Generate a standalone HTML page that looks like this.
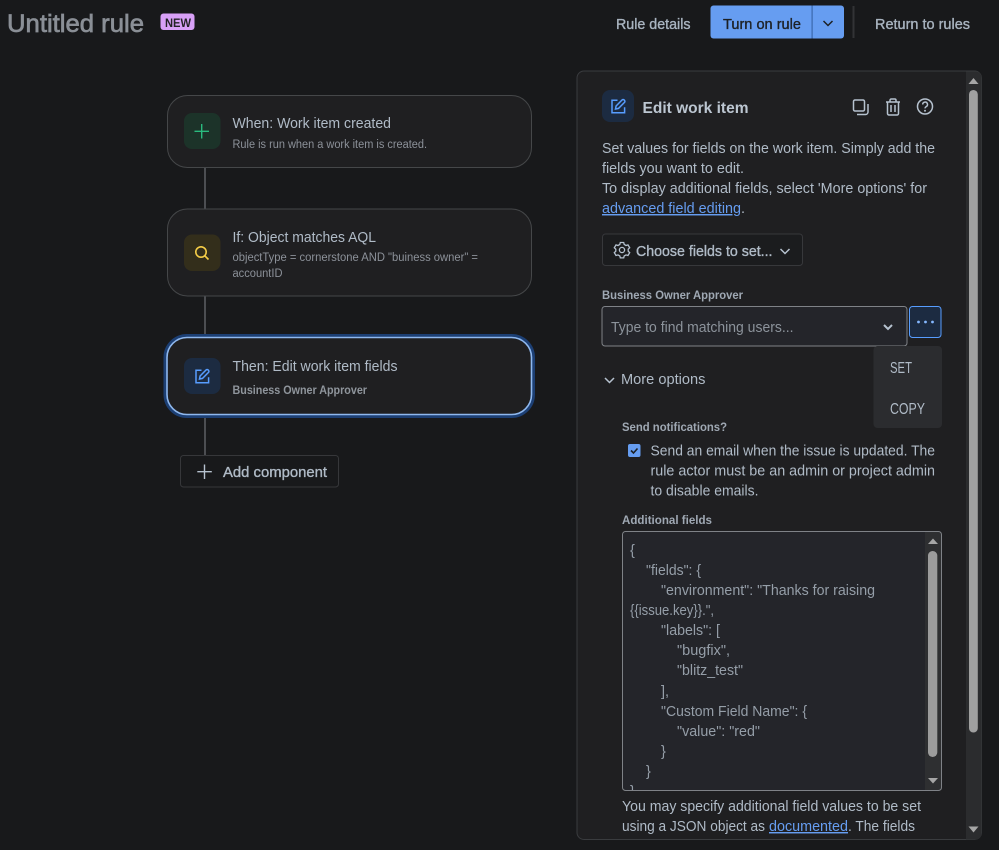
<!DOCTYPE html>
<html lang="en"><head><meta charset="utf-8"><title>Untitled rule</title>
<style>
html,body{margin:0;padding:0;background:#18191b;width:999px;height:850px;overflow:hidden}
svg{display:block}
text{font-family:"Liberation Sans",sans-serif;font-size:14.5px;fill:#b0bbc7;white-space:pre}
.m{stroke:currentColor;stroke-width:.35}
.s{font-size:11.5px;fill:#8c9199}
.b{font-size:12px;font-weight:700;fill:#9fa8b3}
.j{fill:#959ea8}
.l{fill:#669df1}
</style></head><body>
<svg width="999" height="850" viewBox="0 0 999 850" xmlns="http://www.w3.org/2000/svg">
<defs><clipPath id="ta"><rect x="623" y="532" width="302" height="258"/></clipPath></defs>
<rect width="999" height="850" fill="#18191b"/>

<!-- header -->
<text x="7" y="32" textLength="137" lengthAdjust="spacingAndGlyphs" style="font-size:25px;fill:#8a8f96;color:#8a8f96;stroke-width:.7" class="m">Untitled rule</text>
<rect x="160.5" y="13.5" width="34" height="16.5" rx="3" fill="#d8a0f7"/>
<text x="165" y="27" textLength="26" lengthAdjust="spacingAndGlyphs" style="font-size:12px;font-weight:700;fill:#232326">NEW</text>

<text x="616" y="29" textLength="74.5" lengthAdjust="spacingAndGlyphs" class="m" style="color:#a9b4c0;fill:#a9b4c0">Rule details</text>
<rect x="710.5" y="5.5" width="133.5" height="33" rx="3" fill="#669df1"/>
<rect x="811.5" y="5.5" width="1.2" height="33" fill="#3a68ad"/>
<text x="723" y="29" textLength="78" lengthAdjust="spacingAndGlyphs" class="m" style="color:#1d2125;fill:#1d2125">Turn on rule</text>
<path d="M823.5 21l4.5 4.5 4.5-4.5" fill="none" stroke="#1d2125" stroke-width="1.5"/>
<rect x="852.5" y="6" width="2" height="32" fill="#323336"/>
<text x="875" y="29" textLength="95" lengthAdjust="spacingAndGlyphs" class="m" style="color:#a9b4c0;fill:#a9b4c0">Return to rules</text>

<!-- connectors -->
<rect x="204" y="167" width="2" height="42" fill="#4c4e52"/>
<rect x="204" y="296" width="2" height="42" fill="#4c4e52"/>
<rect x="204" y="415" width="2" height="41" fill="#4c4e52"/>

<!-- card 1 -->
<rect x="167.5" y="95.5" width="364" height="72" rx="20" fill="#1f1f21" stroke="#454749"/>
<rect x="184" y="113" width="36.5" height="36" rx="8" fill="#1c3329"/>
<path d="M201.7 124v14.5M194.5 131.3h14.5" stroke="#2abb7f" stroke-width="1.4" fill="none"/>
<text x="232.5" y="128" textLength="158.5" lengthAdjust="spacingAndGlyphs">When: Work item created</text>
<text class="s" x="232.5" y="148" textLength="194.5" lengthAdjust="spacingAndGlyphs">Rule is run when a work item is created.</text>

<!-- card 2 -->
<rect x="167.5" y="209" width="364" height="87" rx="20" fill="#1f1f21" stroke="#454749"/>
<rect x="184" y="234.5" width="36.5" height="36.5" rx="8" fill="#332e1b"/>
<circle cx="201" cy="252" r="5.2" fill="none" stroke="#f5cd47" stroke-width="1.6"/>
<path d="M205 256l3.5 3.5" stroke="#f5cd47" stroke-width="1.6" fill="none"/>
<text x="232.5" y="242" textLength="143.5" lengthAdjust="spacingAndGlyphs">If: Object matches AQL</text>
<text class="s" x="232.5" y="261" textLength="245.5" lengthAdjust="spacingAndGlyphs">objectType = cornerstone AND "buiness owner" =</text>
<text class="s" x="232.5" y="277" textLength="50" lengthAdjust="spacingAndGlyphs">accountID</text>

<!-- card 3 -->
<rect x="165" y="335.5" width="368.5" height="81" rx="22" fill="none" stroke="#1c3f74" stroke-width="3"/>
<rect x="167" y="337.5" width="364.5" height="77" rx="20" fill="#1f1f21" stroke="#8fb8ee" stroke-width="1.6"/>
<rect x="184" y="358" width="36.5" height="36" rx="8" fill="#1c2b41"/>
<g fill="none" stroke="#579dff" stroke-width="1.5" transform="translate(195,369)">
<path d="M6.5 1.2H1v12.6h12.6V8.3"/><path d="M4.5 10l.6-3L11 1a1.4 1.4 0 0 1 2.2 0l.3.4a1.4 1.4 0 0 1 0 2L7.5 9.4z"/>
</g>
<text x="232.5" y="371" textLength="165" lengthAdjust="spacingAndGlyphs">Then: Edit work item fields</text>
<text class="s" x="232.5" y="394" textLength="134.5" lengthAdjust="spacingAndGlyphs" style="font-weight:700;fill:#8f959c">Business Owner Approver</text>

<!-- add component -->
<rect x="180.5" y="455.5" width="158" height="31.5" rx="3" fill="#18191b" stroke="#36373a"/>
<path d="M204.5 464.5v14.5M197.3 471.7h14.5" stroke="#b6c2cf" stroke-width="1.4" fill="none"/>
<text x="223" y="477" textLength="104" lengthAdjust="spacingAndGlyphs" class="m" style="color:#b0bbc7">Add component</text>

<!-- panel -->
<rect x="577" y="71" width="404.5" height="768.5" rx="7" fill="#1f1f21" stroke="#3a3c3f"/>
<path d="M966 71.5h9.5a6 6 0 0 1 6 6v756a6 6 0 0 1-6 6H966z" fill="#2b2c2e"/>
<path d="M973.5 78l5 6h-10z" fill="#a6a6a6"/>
<rect x="969" y="90" width="8.8" height="642.5" rx="4.4" fill="#a0a0a0"/>
<path d="M973.5 832.5l-5-6h10z" fill="#a6a6a6"/>

<rect x="602" y="90" width="32" height="32" rx="8" fill="#1c2b41"/>
<g fill="none" stroke="#579dff" stroke-width="1.5" transform="translate(611,99)">
<path d="M6.5 1.2H1v12.6h12.6V8.3"/><path d="M4.5 10l.6-3L11 1a1.4 1.4 0 0 1 2.2 0l.3.4a1.4 1.4 0 0 1 0 2L7.5 9.4z"/>
</g>
<text x="642.5" y="113" textLength="106" lengthAdjust="spacingAndGlyphs" style="font-size:16px;font-weight:700;fill:#bcc6d1">Edit work item</text>

<!-- panel action icons -->
<g fill="none" stroke="#b6c2cf" stroke-width="1.5">
<rect x="853.5" y="100" width="11" height="11" rx="1.5"/>
<path d="M868 104v8a2.5 2.5 0 0 1-2.5 2.5H857"/>
<path d="M886 102h14M890 102v-1.8a1.2 1.2 0 0 1 1.2-1.2h3.6a1.2 1.2 0 0 1 1.2 1.2V102M887.5 102v11.5a1.5 1.5 0 0 0 1.5 1.5h8a1.5 1.5 0 0 0 1.5-1.5V102M891 105v7M895 105v7"/>
<circle cx="925" cy="106.5" r="7.5"/>
<path d="M922.7 104.5a2.4 2.4 0 1 1 3.5 2.1c-.8.5-1.2.9-1.2 1.8"/>
</g>
<circle cx="925" cy="110.8" r="1" fill="#b6c2cf"/>

<text x="602" y="153" textLength="333" lengthAdjust="spacingAndGlyphs">Set values for fields on the work item. Simply add the</text>
<text x="602" y="173" textLength="142" lengthAdjust="spacingAndGlyphs">fields you want to edit.</text>
<text x="602" y="193" textLength="325" lengthAdjust="spacingAndGlyphs">To display additional fields, select 'More options' for</text>
<text class="l" x="602" y="213" textLength="139" lengthAdjust="spacingAndGlyphs" text-decoration="underline">advanced field editing</text>
<text x="741" y="213">.</text>

<rect x="602.5" y="234" width="200" height="31.5" rx="3" fill="#1b1c1e" stroke="#37383b"/>
<g fill="none" stroke="#b6c2cf" stroke-width="1.3">
<circle cx="622" cy="250" r="2.6"/>
<path d="M620.3 242.5h3.4l.5 2 1.8 1 2-.6 1.7 2.9-1.5 1.4v2l1.5 1.4-1.7 2.9-2-.6-1.8 1-.5 2h-3.4l-.5-2-1.8-1-2 .6-1.7-2.9 1.5-1.4v-2l-1.5-1.4 1.7-2.9 2 .6 1.8-1z"/>
</g>
<text x="636" y="256" textLength="136.5" lengthAdjust="spacingAndGlyphs" class="m" style="color:#b0bbc7">Choose fields to set...</text>
<path d="M780.5 249l4.5 4.5 4.5-4.5" fill="none" stroke="#b6c2cf" stroke-width="1.5"/>

<text class="b" x="602" y="299" textLength="141" lengthAdjust="spacingAndGlyphs">Business Owner Approver</text>
<rect x="602" y="306.5" width="305" height="39.5" rx="3" fill="#24252a" stroke="#7f8287"/>
<text x="611" y="332" textLength="182.5" lengthAdjust="spacingAndGlyphs" style="fill:#8c939b">Type to find matching users...</text>
<path d="M884 325l4 4 4-4" fill="none" stroke="#b6c2cf" stroke-width="2"/>
<rect x="909.5" y="306.5" width="31.5" height="31" rx="3" fill="#1c2b41" stroke="#579dff"/>
<circle cx="918.5" cy="322" r="1.4" fill="#85b8ff"/><circle cx="925.5" cy="322" r="1.4" fill="#85b8ff"/><circle cx="932.5" cy="322" r="1.4" fill="#85b8ff"/>

<path d="M605 378l4.5 4.5 4.5-4.5" fill="none" stroke="#b6c2cf" stroke-width="1.5"/>
<text x="621" y="384" textLength="84.5" lengthAdjust="spacingAndGlyphs">More options</text>

<rect x="873.5" y="346" width="68.5" height="82" rx="4" fill="#2b2c2f"/>
<text x="890" y="373" textLength="22" lengthAdjust="spacingAndGlyphs" style="font-size:16px">SET</text>
<text x="890" y="414" textLength="35" lengthAdjust="spacingAndGlyphs" style="font-size:16px">COPY</text>

<text class="b" x="622" y="431" textLength="105" lengthAdjust="spacingAndGlyphs">Send notifications?</text>
<rect x="628" y="444" width="12.5" height="13" rx="2" fill="#669df1"/>
<path d="M631 450.5l2.5 2.5 4-4.5" fill="none" stroke="#1d2125" stroke-width="1.6"/>
<text x="650.5" y="455.5" textLength="284.5" lengthAdjust="spacingAndGlyphs">Send an email when the issue is updated. The</text>
<text x="650.5" y="475.5" textLength="284.5" lengthAdjust="spacingAndGlyphs">rule actor must be an admin or project admin</text>
<text x="650.5" y="495.5" textLength="108" lengthAdjust="spacingAndGlyphs">to disable emails.</text>

<text class="b" x="622" y="524" textLength="90" lengthAdjust="spacingAndGlyphs">Additional fields</text>

<!-- textarea -->
<rect x="622.5" y="531.5" width="319" height="259" rx="3" fill="#24252a"/>
<text class="j" x="630" y="555">{</text>
<text class="j" x="646" y="575" textLength="55" lengthAdjust="spacingAndGlyphs">"fields": {</text>
<text class="j" x="661" y="595" textLength="214" lengthAdjust="spacingAndGlyphs">"environment": "Thanks for raising</text>
<text class="j" x="630" y="615" textLength="84" lengthAdjust="spacingAndGlyphs">{{issue.key}}.",</text>
<text class="j" x="661" y="635" textLength="59" lengthAdjust="spacingAndGlyphs">"labels": [</text>
<text class="j" x="677" y="655" textLength="53" lengthAdjust="spacingAndGlyphs">"bugfix",</text>
<text class="j" x="677" y="675" textLength="66" lengthAdjust="spacingAndGlyphs">"blitz_test"</text>
<text class="j" x="661" y="696">],</text>
<text class="j" x="661" y="716" textLength="146" lengthAdjust="spacingAndGlyphs">"Custom Field Name": {</text>
<text class="j" x="677" y="736" textLength="83" lengthAdjust="spacingAndGlyphs">"value": "red"</text>
<text class="j" x="661" y="756">}</text>
<text class="j" x="646" y="776">}</text>
<text class="j" x="630" y="796" clip-path="url(#ta)">}</text>
<rect x="925" y="532" width="16" height="258" fill="#2e2f31"/>
<path d="M933 538.5l5 5.5h-10z" fill="#a6a6a6"/>
<rect x="928" y="551" width="9.3" height="206" rx="4.6" fill="#9c9c9c"/>
<path d="M933 783.5l-5-5.5h10z" fill="#a6a6a6"/>
<rect x="622.5" y="531.5" width="319" height="259" rx="3" fill="none" stroke="#7f8287"/>

<text x="622" y="811" textLength="299" lengthAdjust="spacingAndGlyphs">You may specify additional field values to be set</text>
<text x="622" y="831" textLength="143" lengthAdjust="spacingAndGlyphs">using a JSON object as</text>
<text class="l" x="769" y="831" textLength="79" lengthAdjust="spacingAndGlyphs" text-decoration="underline">documented</text>
<text x="848" y="831" textLength="67" lengthAdjust="spacingAndGlyphs">. The fields</text>
</svg>
</body></html>
